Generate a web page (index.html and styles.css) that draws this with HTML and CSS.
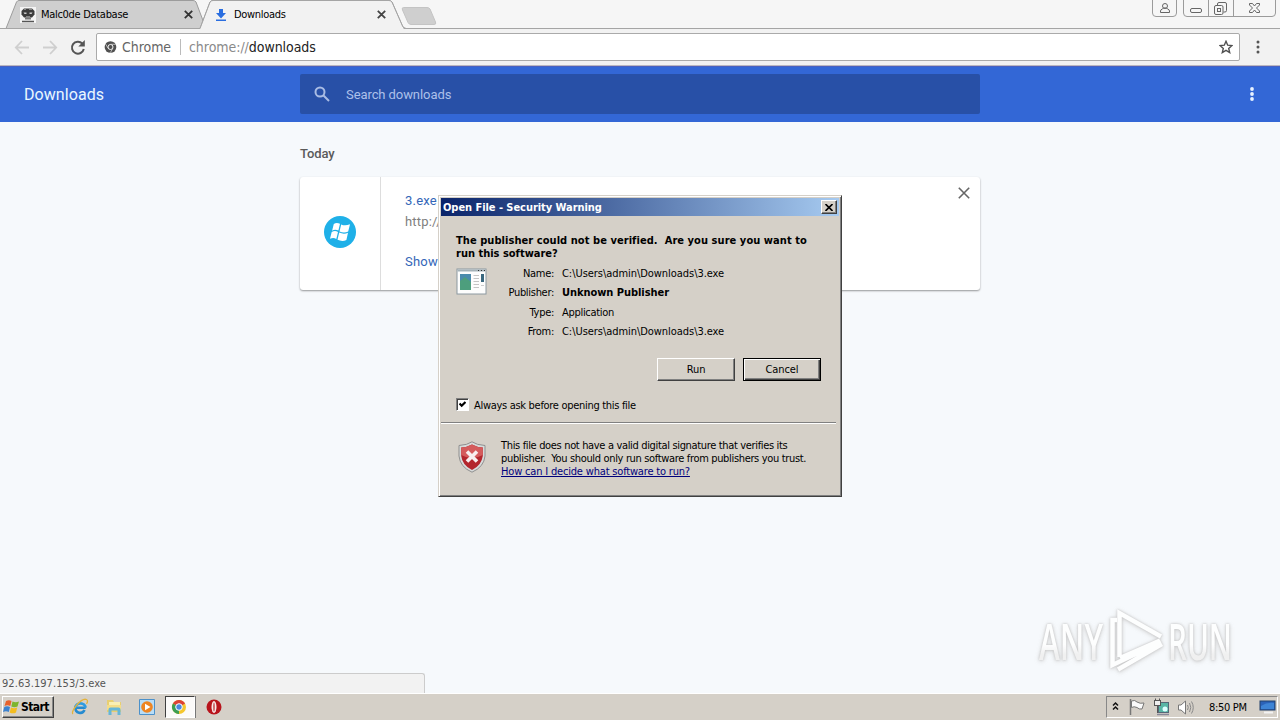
FILE: index.html
```html
<!DOCTYPE html>
<html lang="en">
<head>
<meta charset="utf-8">
<title>Downloads</title>
<link rel="stylesheet" href="styles.css">
</head>
<body>
<div class="screen">
  <div class="tabstrip">
    <svg class="tabshapes" width="450" height="29" viewBox="0 0 450 29">
      <path d="M0 28.5H6L16.500 2Q17.500 .5 19 .5H193Q195 .5 196 2L206 28.500" fill="#cfcfcf" stroke="#9c9c9c"/>
      <path d="M0 28.5H200L210 2Q211 .5 213 .5H389Q391 .5 392 2L402.500 26Q403.500 28.500 406 28.500H450" fill="none" stroke="#a5a5a5"/>
      <path d="M200 29L210.500 2.500Q211 1 213 1H389Q391 1 391.500 2.500L402 26Q403 28 404 29Z" fill="#f2f2f2"/>
      <path d="M200 28.500L210 2Q211 .5 213 .5H389Q391 .5 392 2L402.500 26Q403.500 28.500 406 28.500" fill="none" stroke="#a5a5a5"/>
      <path d="M403.500 7.500H427Q429 7.500 430 9L435.500 22Q436.500 24.500 434 24.500H411Q409 24.500 408 22.500L402.500 10Q401.500 7.500 403.500 7.500Z" fill="#cfcfcf" stroke="#c4c4c4"/>
    </svg>
    <div class="tab tab-back">
      <svg class="favicon" width="16" height="16" viewBox="0 0 16 16"><rect width="16" height="16" fill="#f4f4f4"/><path d="M1.500 4L4 1.500H12L14.500 4V7.500L12 10.500H4L1.500 7.500Z" fill="#3c3c3c"/><path d="M3.500 5.500H6.500V7H4.500ZM9.500 5.500H12.500L11.500 7H9.500Z" fill="#ccc"/><path d="M4 2.500H6M9 2.500H12M6 9.500H10" stroke="#888"/><path d="M5 10.500H11V12.500H5Z" fill="#777"/><path d="M2 14.500H14" stroke="#555" stroke-width="1.500"/></svg>
      <span class="ui tabname">Malc0de Database</span>
      <svg class="x" width="9" height="9" viewBox="0 0 9 9"><path d="M.8 .8L8.200 8.200M8.200 .8L.8 8.200" stroke="#333" stroke-width="1.800"/></svg>
    </div>
    <div class="tab tab-front">
      <svg class="favicon" width="14" height="16" viewBox="0 0 14 16"><path d="M5 2H9V6H12L7 11.500L2 6H5ZM2 12.500H12V14H2Z" fill="#2a6ee0"/></svg>
      <span class="ui tabname">Downloads</span>
      <svg class="x" width="9" height="9" viewBox="0 0 9 9"><path d="M.8 .8L8.200 8.200M8.200 .8L.8 8.200" stroke="#444" stroke-width="1.800"/></svg>
    </div>
    <svg class="winbtns" width="130" height="20" viewBox="0 0 130 20" fill="none" stroke="#9b9b9b">
      <path d="M2.500 0V13Q2.500 16.500 6 16.500H23Q26.500 16.500 26.500 13V0" fill="#f6f6f6"/>
      <path d="M33.500 0V13Q33.500 16.500 37 16.500H122Q125.500 16.500 125.500 13V0" fill="#f6f6f6"/>
      <path d="M58.500 0V16M83.500 0V16"/>
      <g stroke="#666"><circle cx="15" cy="6" r="2.500"/><path d="M10.500 12.500V11Q10.500 9.500 12.500 9L13.500 8H16.500L17.500 9Q19.500 9.500 19.500 11V12.500Z"/>
      <rect x="40.500" y="8.500" width="11" height="4" rx="1.500"/>
      <path d="M67.500 5.500V4Q67.500 2.500 69 2.500H75Q76.500 2.500 76.500 4V10.500Q76.500 12 75 12H73.500"/><rect x="64.500" y="5.500" width="8.500" height="9" rx="1.500"/><rect x="67.500" y="8.500" width="3" height="3"/>
      <path d="M99.500 3.500H102.500L104.500 6L106.500 3.500H109.500V5L106.500 8L109.500 11V12.500H106.500L104.500 10L102.500 12.500H99.500V11L102.500 8L99.500 5Z"/></g>
    </svg>
  </div>

  <div class="toolbar">
    <svg class="nav" width="96" height="37" viewBox="0 0 96 37" fill="none">
      <g stroke="#cfcfcf" stroke-width="1.800"><path d="M29 18.500H16M22 12L15.800 18.500L22 25"/><path d="M43 18.500H56M50 12L56.200 18.500L50 25"/></g>
      <path d="M82.300 14.500A6 6 0 1 0 83.800 20" stroke="#555" stroke-width="2"/><path d="M84.800 11V17.500H78.300Z" fill="#555"/>
    </svg>
    <div class="omnibox">
      <svg width="13" height="14" viewBox="0 0 14 14"><circle cx="7" cy="7" r="6.300" fill="#505050"/><circle cx="7" cy="7" r="2.700" fill="#505050" stroke="#fff" stroke-width="1"/><path d="M7 4.100H12.700M4.500 8.500L1.700 3.800M9.500 8.500L6.800 13" stroke="#ddd" stroke-width=".8"/></svg>
      <span class="url scheme">Chrome</span><span class="bar"></span>
      <span class="url address">chrome://<b>downloads</b></span>
      <svg class="star" width="14" height="14" viewBox="0 0 14 14"><path d="M7 1.300L8.700 5.200L12.900 5.600L9.700 8.400L10.700 12.600L7 10.400L3.300 12.600L4.300 8.400L1.100 5.600L5.300 5.200Z" fill="none" stroke="#505050" stroke-width="1.400"/></svg>
    </div>
    <svg class="dots" width="4" height="14" viewBox="0 0 4 14" fill="#555"><circle cx="2" cy="2" r="1.500"/><circle cx="2" cy="7" r="1.500"/><circle cx="2" cy="12" r="1.500"/></svg>
  </div>

  <div class="header">
    <span class="heading">Downloads</span>
    <div class="search">
      <svg width="16" height="16" viewBox="0 0 16 16" fill="none" stroke="#a9bce4" stroke-width="2"><circle cx="6" cy="6" r="4.500"/><path d="M9.500 9.500L15 15"/></svg>
      <span>Search downloads</span>
    </div>
    <svg class="dots" width="4" height="14" viewBox="0 0 4 14" fill="#e8f2ff"><circle cx="2" cy="2" r="1.900"/><circle cx="2" cy="7" r="1.900"/><circle cx="2" cy="12" r="1.900"/></svg>
  </div>

  <div class="content">
    <div class="today">Today</div>
    <div class="card">
      <div class="cardicon">
        <svg width="32" height="32" viewBox="0 0 32 32"><circle cx="16" cy="16" r="16" fill="#1fb0e8"/><g fill="#fff"><path d="M9.800 8Q12.500 6 16 7.800L14.400 14.600Q11 12.800 8.100 14.700Z"/><path d="M17.200 8.500Q21 10.300 26 8.300L24.200 15.500Q20 17.300 15.500 15.400Z"/><path d="M7.700 16Q11 14.100 14 16L12.300 23Q9.500 21.200 6 22.800Z"/><path d="M15.200 16.600Q20 18.600 24 16.700L22.400 23.900Q18.500 25.900 13.500 23.800Z"/></g></svg>
      </div>
      <div class="carddetails">
        <span class="link">3.exe</span>
        <span class="from">http://</span>
        <span class="link show">Show</span>
      </div>
      <svg class="remove" width="12" height="12" viewBox="0 0 12 12"><path d="M.8 .8L11.200 11.200M11.200 .8L.8 11.200" stroke="#666" stroke-width="1.600"/></svg>
    </div>
  </div>

  <div class="taskbar">
    <div class="start"><svg width="17" height="16" viewBox="0 0 17 16"><path d="M3 2Q6 .3 8.500 2L7.300 7Q4.500 5.500 1.500 7Z" fill="#e8622c"/><path d="M9.500 2.500Q12.500 4 16 2.500L14.500 7.500Q11.500 9 8.300 7.500Z" fill="#7db52e"/><path d="M1.300 8Q4 6.500 7 8L5.800 13Q3 11.500 0 13Z" fill="#3c82cf"/><path d="M8 8.500Q11 10 14.200 8.500L13 13.500Q10 15.200 6.700 13.500Z" fill="#f4bd20"/></svg><span class="bold">Start</span></div>
    <div class="quick">
      <svg width="18" height="18" viewBox="0 0 18 18"><path d="M14.700 9.800H4.500A4.700 4.700 0 0 0 13.500 12" fill="none" stroke="#268bd0" stroke-width="2.600"/><path d="M4.300 9.800A5.200 5.200 0 0 1 14.600 9.800" fill="none" stroke="#2f9be0" stroke-width="2.800"/><path d="M2 16C-1 14 10-.5 15.500 1.500Q17.500 2.500 15.500 6" fill="none" stroke="#e4b33c" stroke-width="1.300"/></svg>
      <svg width="18" height="18" viewBox="0 0 18 18"><path d="M2 2H8L9 4H16V14H2Z" fill="#e8cf72"/><path d="M4 4H15V8H4Z" fill="#f9efb3"/><path d="M2 7H16V12H2Z" fill="#f4dd88"/><path d="M3.500 17V11.500Q3.500 9.500 5.500 9.500H13.500Q15.500 9.500 15.500 11.500V17H12.500V12.500H6.500V17Z" fill="#65b6d8"/></svg>
      <svg width="18" height="18" viewBox="0 0 18 18"><path d="M1.500 1.500H16.500V16.500H1.500Z" fill="#b8ddf7" stroke="#4c91ca"/><circle cx="9" cy="9" r="5.800" fill="#ee8522"/><path d="M7 5.700L12.500 9L7 12.300Z" fill="#fff"/></svg>
      <div class="running"><svg width="16" height="16" viewBox="0 0 16 16"><circle cx="8" cy="8" r="7" fill="#f5c72d"/><path d="M8 8L1.900 4.500A7 7 0 0 1 14.100 4.500Z" fill="#dc4336"/><path d="M8 8L1.900 4.500A7 7 0 0 0 8 15Z" fill="#3d9e53"/><circle cx="8" cy="8" r="3.300" fill="#4a88e0" stroke="#fff"/></svg></div>
      <svg class="opera" width="16" height="16" viewBox="0 0 16 16"><circle cx="8" cy="8" r="7.500" fill="#b8141c"/><ellipse cx="8" cy="8" rx="2.500" ry="6" fill="#f8eaea"/><ellipse cx="8" cy="8" rx=".8" ry="4.600" fill="#c54b50"/></svg>
    </div>
    <div class="tray">
      <svg width="90" height="20" viewBox="0 0 90 20" fill="none">
        <path d="M6 8.500L8.500 6L11 8.500M6 12.500L8.500 10L11 12.500" stroke="#111" stroke-width="1.500"/>
        <path d="M23.500 2V18" stroke="#777" stroke-width="1.500"/><path d="M24.500 4Q28 2.500 30 5Q33 7 37 6L35 12Q32 12.500 30 10.500Q27 9 24.500 10.500Z" fill="#fafafa" stroke="#777"/>
        <rect x="51.500" y="5.500" width="10" height="10" fill="#58b5a5" stroke="#567"/><path d="M50 17.500H62" stroke="#889" stroke-width="1.500"/><rect x="47.500" y="3.500" width="6" height="5" fill="#eee" stroke="#555"/><path d="M48.500 1.500V4M52.500 1.500V4M50.500 9V16" stroke="#555"/><circle cx="58" cy="12" r="2.500" fill="#dff"/>
        <path d="M71.500 8H74L78.500 4V17L74 13H71.500Z" fill="#fff" stroke="#777"/><path d="M80.500 8Q82 10.500 80.500 13M82.500 6Q85 10.500 82.500 15M84.500 4.500Q88 10.500 84.500 16.500" stroke="#888"/>
      </svg>
      <span class="ui clock">8:50 PM</span>
      <svg class="desktop" width="17" height="16" viewBox="0 0 17 16"><rect x="1" y="2" width="15" height="9" fill="#2b62b8" stroke="#23416b"/><path d="M2 10V7Q8 3 15 4V10Z" fill="#3e84d5"/><path d="M5 13.500H14" stroke="#f2f2f2" stroke-width="2"/></svg>
    </div>
  </div>

  <div class="status"><span>92.63.197.153/3.exe</span></div>

  <svg class="watermark" width="230" height="90" viewBox="0 0 230 90">
    <defs><linearGradient id="fade" x1="0" y1="0" x2="0" y2="1"><stop offset=".55" stop-color="#fff"/><stop offset=".7" stop-color="#efefef"/></linearGradient></defs>
    <g class="wmshape">
    <text x="5" y="58" textLength="64" lengthAdjust="spacingAndGlyphs">ANY</text>
    <text x="134" y="58" textLength="64" lengthAdjust="spacingAndGlyphs">RUN</text>
    <path class="play" d="M85.500 55V11L127 34.500M86 56L126 38.500M83 18H78.500V63L127 40M84 67.500L128 42"/>
    </g>
  </svg>

  <div class="dialog">
    <div class="titlebar"><span class="bold">Open File - Security Warning</span>
      <div class="close"><svg width="8" height="7" viewBox="0 0 8 7"><path d="M.5 0L7.500 7M7.500 0L.5 7" stroke="#000" stroke-width="1.600"/></svg></div>
    </div>
    <div class="upper">
      <div class="bold question"><div class="q1">The publisher could not be verified.&nbsp; Are you sure you want to</div><div>run this software?</div></div>
      <div class="info">
        <svg width="32" height="27" viewBox="0 0 32 27"><rect x="1" y="1" width="29" height="25" fill="#fdfdfd" stroke="#8c98a0"/><path d="M1.500 2.500H29.500" stroke="#a5b2b8" stroke-width="2"/><path d="M22 2.500H23M25 2.500H26M28 2.500H29" stroke="#333"/><rect x="4" y="6" width="11" height="16" fill="#4a8bac"/><path d="M4 22V13L9 9L15 14V22Z" fill="#4d9e7d"/><path d="M17.500 7.500H23M17.500 10.500H23M17.500 13.500H23M17.500 16.500H23M17.500 19.500H23" stroke="#c4c4c4"/><rect x="25" y="6" width="3" height="8" fill="#3a687f"/><path d="M25 17.500H28" stroke="#ccc"/></svg>
        <div class="fields">
          <span class="ui lab">Name:</span><span class="ui path">C:\Users\admin\Downloads\3.exe</span>
          <span class="ui lab">Publisher:</span><span class="bold">Unknown Publisher</span>
          <span class="ui lab">Type:</span><span class="ui">Application</span>
          <span class="ui lab">From:</span><span class="ui path">C:\Users\admin\Downloads\3.exe</span>
        </div>
      </div>
      <div class="buttons"><div class="btn ui">Run</div><div class="btn cancel ui">Cancel</div></div>
      <div class="ask"><span class="check"><svg width="7" height="7" viewBox="0 0 7 7"><path d="M.5 2.500L2.700 4.800L6.500 1" fill="none" stroke="#000" stroke-width="2.200"/></svg></span><span class="ui">Always ask before opening this file</span></div>
    </div>
    <div class="lower">
      <svg class="shield" width="28" height="32" viewBox="0 0 28 32"><path d="M14 .8Q18.500 4 27 4.500V15Q26 26 14 31.200Q2 26 1 15V4.500Q9.500 4 14 .8Z" fill="#d7dbdb" stroke="#8f8f8f"/><path d="M14 3.500Q19 6.300 24.800 6.500V15Q23.500 24.500 14 29Q4.500 24.500 3.200 15V6.500Q9 6.300 14 3.500Z" fill="#b3262d"/><path d="M14 3.500Q19 6.300 24.800 6.500V14Q14 20 3.200 14V6.500Q9 6.300 14 3.500Z" fill="#d45b5c"/><path d="M9 10.500L19 20.500M19 10.500L9 20.500" stroke="#f8efef" stroke-width="3.600"/></svg>
      <div class="ui note"><div>This file does not have a valid digital signature that verifies its</div><div>publisher.&nbsp; You should only run software from publishers you trust.</div><div class="help">How can I decide what software to run?</div></div>
    </div>
  </div>
</div>
</body>
</html>
```
FILE: styles.css
```css
* { box-sizing: border-box; }
body { margin: 0; }
.screen { position: relative; width: 1280px; height: 720px; overflow: hidden; display: flex; flex-direction: column; background: #f6f9fc; white-space: nowrap; }
svg { display: block; flex: none; }
.ui, .bold, .status { font: 11px/13px "DejaVu Sans Condensed", "DejaVu Sans", sans-serif; font-stretch: condensed; letter-spacing: -.3px; color: #000; }
.bold { font-weight: bold; letter-spacing: -.05px; }

.tabstrip { position: relative; height: 29px; flex: none; display: flex; background: #f6f6f6; border-bottom: 1px solid #a5a5a5; }
.tabshapes { position: absolute; left: 0; top: 0; }
.tab { position: relative; display: flex; height: 29px; align-items: center; }
.tab-back { width: 206px; padding: 0 13px 0 20px; }
.tab-front { width: 194px; padding: 0 14px 0 8px; }
.favicon { margin-right: 6px; }
.tab-back .favicon { margin-right: 5px; }
.tab .x { margin-left: auto; }
.winbtns { margin-left: auto; }

.toolbar { height: 37px; flex: none; display: flex; align-items: center; background: #f2f2f2; border-bottom: 1px solid #bbb7c0; }
.omnibox { width: 1144px; height: 28px; display: flex; align-items: center; padding: 0 6px 0 7px; background: #fff; border: 1px solid #aaa; border-radius: 2px; }
.url { font: 14px/18px "DejaVu Sans Condensed", "DejaVu Sans", sans-serif; font-stretch: condensed; letter-spacing: -.05px; color: #666; }
.url b { font-weight: normal; color: #222; }
.scheme { width: 50px; margin-left: 5px; }
.bar { width: 1px; height: 16px; margin: 0 8px; background: #bbb; }
.address { color: #8a8a8a; }
.star { margin-left: auto; }
.toolbar .dots { margin-left: 16px; }

.header { height: 56px; flex: none; display: flex; align-items: center; padding: 0 26px 0 24px; background: #3367d6; box-shadow: inset 0 1px #4a62c0; font-family: Roboto, sans-serif; }
.heading { width: 276px; font-size: 16px; letter-spacing: .07px; color: #eaf7ff; padding-top: 1px; }
.search { width: 680px; height: 40px; display: flex; align-items: center; padding-left: 14px; gap: 16px; background: #2850a7; border-radius: 2px; color: #adc0ea; font-size: 13px; letter-spacing: -.08px; }
.header .dots { margin-left: auto; }

.content { flex: 1; padding: 24px 300px; font: 13px/16px Roboto, sans-serif; }
.today { font-weight: 500; letter-spacing: -.1px; color: #5a5a5a; margin-bottom: 15px; }
.card { display: flex; width: 680px; height: 113px; background: #fff; border-radius: 3px; box-shadow: 0 1px 2px rgba(0,0,0,.4); }
.cardicon { width: 81px; border-right: 1px solid #ddd; display: flex; align-items: center; justify-content: center; padding-bottom: 4px; }
.carddetails { flex: 1; display: flex; flex-direction: column; padding: 16px 24px; letter-spacing: .2px; }
.link { color: #3366b8; }
.from { color: #808080; margin-top: 5px; }
.show { margin-top: 24px; }
.remove { margin: 10px 10px 0 0; }

.taskbar { height: 27px; flex: none; display: flex; align-items: flex-start; padding: 2px 2px 0; background: #d5d0c8; border-top: 1px solid #fff; }
.start { width: 52px; height: 22px; display: flex; align-items: center; border: 1px solid; border-color: #fff #404040 #404040 #fff; box-shadow: inset -1px -1px #888; }
.start .bold { margin-left: 1px; font-size: 12px; letter-spacing: -.55px; }
.quick { display: flex; align-items: center; margin-left: 17px; gap: 15.500px; }
.running { width: 30px; height: 22px; display: flex; align-items: center; padding-left: 5px; margin-left: -7px; background: #fbfaf9; border: 1px solid; border-color: #404040 #fff #fff #404040; box-shadow: 1px 0 #777; }
.opera { margin-left: -4px; }
.tray { width: 172px; height: 22px; margin-left: auto; display: flex; align-items: center; border: 1px solid; border-color: #888 #fff #fff #888; }
.clock { width: 45px; margin-left: 12px; }
.desktop { margin-left: 5px; }

.status { position: absolute; left: 0; top: 673px; width: 425px; height: 20px; padding: 3px 2px; background: #f2f2f2; border: solid #ccc; border-width: 1px 1px 0 0; border-radius: 0 3px 0 0; color: #555; letter-spacing: .07px; }
.watermark { position: absolute; left: 1034px; top: 602px; }
.wmshape { fill: url(#fade); filter: drop-shadow(0 0 1px #bbb) drop-shadow(0 1px 2px #d0d0d0); opacity: .85; font: 600 50px "Open Sans", sans-serif; }
.play { fill: none; stroke: #fff; stroke-width: 4.500; }

.dialog { position: absolute; left: 438px; top: 195px; width: 404px; height: 302px; padding: 2px; background: #d5d0c8; border: 1px solid; border-color: #d5d0c8 #404040 #404040 #d5d0c8; box-shadow: inset 1px 1px #fff, inset -1px -1px #808080; }
.titlebar { height: 18px; display: flex; align-items: center; justify-content: space-between; padding: 0 2px; background: linear-gradient(90deg, #0a246a, #a6caf0); }
.titlebar .bold { color: #fff; }
.close { width: 16px; height: 14px; display: flex; align-items: center; justify-content: center; background: #d5d0c8; border: 1px solid; border-color: #fff #404040 #404040 #fff; box-shadow: inset -1px -1px #808080; }
.upper { height: 207px; margin-right: 3px; padding: 18px 15px 0; border-bottom: 1px solid #808080; box-shadow: 0 1px #fff; }
.question { letter-spacing: 0; }
.q1 { letter-spacing: .06px; }
.info { display: flex; margin-top: 7px; }
.info > svg { margin-top: 1px; }
.fields { display: grid; grid-template-columns: 66px auto; column-gap: 8px; grid-auto-rows: 19.400px; }
.lab { text-align: right; }
.path { letter-spacing: -.05px; }
.buttons { display: flex; gap: 8px; justify-content: flex-end; margin-top: 13px; }
.btn { width: 78px; height: 23px; line-height: 21px; letter-spacing: -.1px; text-align: center; border: 1px solid; border-color: #fff #404040 #404040 #fff; box-shadow: inset -1px -1px #808080; }
.cancel { border-color: #000; box-shadow: inset 1px 1px #fff, inset -1px -1px #404040, inset -2px -2px #808080; }
.ask { display: flex; gap: 5px; margin-top: 17px; }
.ask .ui { padding-top: 1px; }
.check { width: 13px; height: 13px; display: flex; align-items: center; justify-content: center; background: #fff; border: 1px solid; border-color: #808080 #fff #fff #808080; box-shadow: inset 1px 1px #404040; }
.lower { display: flex; padding: 16px 17px; gap: 15px; }
.shield { margin-top: 2px; }
.note { letter-spacing: -.34px; }
.help { color: #00007c; text-decoration: underline; letter-spacing: -.18px; }
```
